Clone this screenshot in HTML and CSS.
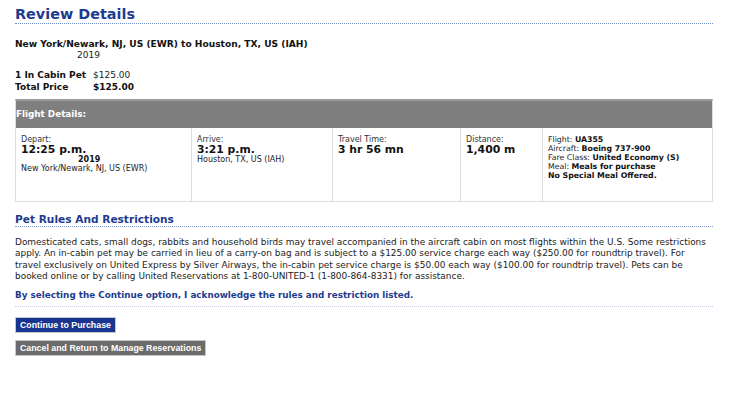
FILE: index.html
```html
<!DOCTYPE html>
<html lang="en">
<head>
    <meta charset="UTF-8">
    <title>Review Details</title>
    <link rel="stylesheet" href="styles.css">
</head>
<body>
    <div class="page">
        <h1 class="title">Review Details</h1>

        <div class="route">
            <p class="route-name">New York/Newark, NJ, US (EWR) to Houston, TX, US (IAH)</p>
            <p class="route-date">2019</p>
        </div>

        <div class="price">
            <div class="price-row"><span class="price-label">1 In Cabin Pet</span><span>$125.00</span></div>
            <div class="price-row total"><span class="price-label">Total Price</span><span>$125.00</span></div>
        </div>

        <div class="flight">
            <div class="flight-head">Flight Details:</div>
            <div class="flight-body">
                <div class="cell">
                    <div class="lbl">Depart:</div>
                    <div class="big">12:25 p.m.</div>
                    <div class="date">2019</div>
                    <div>New York/Newark, NJ, US (EWR)</div>
                </div>
                <div class="cell">
                    <div class="lbl">Arrive:</div>
                    <div class="big">3:21 p.m.</div>
                    <div>Houston, TX, US (IAH)</div>
                </div>
                <div class="cell">
                    <div class="lbl">Travel Time:</div>
                    <div class="big">3 hr 56 mn</div>
                </div>
                <div class="cell">
                    <div class="lbl">Distance:</div>
                    <div class="big">1,400 m</div>
                </div>
                <div class="cell info">
                    <div>Flight: <b>UA355</b></div>
                    <div>Aircraft: <b>Boeing 737-900</b></div>
                    <div>Fare Class: <b>United Economy (S)</b></div>
                    <div>Meal: <b>Meals for purchase</b></div>
                    <div><b>No Special Meal Offered.</b></div>
                </div>
            </div>
        </div>

        <h2 class="section">Pet Rules And Restrictions</h2>
        <p class="rules">Domesticated cats, small dogs, rabbits and household birds may travel accompanied in the aircraft cabin on most flights within the U.S. Some restrictions apply. An in-cabin pet may be carried in lieu of a carry-on bag and is subject to a $125.00 service charge each way ($250.00 for roundtrip travel). For travel exclusively on United Express by Silver Airways, the in-cabin pet service charge is $50.00 each way ($100.00 for roundtrip travel). Pets can be booked online or by calling United Reservations at 1-800-UNITED-1 (1-800-864-8331) for assistance.</p>

        <p class="agree">By selecting the Continue option, I acknowledge the rules and restriction listed.</p>

        <div class="actions">
            <button class="btn btn-primary">Continue to Purchase</button>
            <button class="btn btn-gray">Cancel and Return to Manage Reservations</button>
        </div>
    </div>
</body>
</html>
```

FILE: styles.css
```css
body {
    margin: 0;
    font-family: Verdana, "DejaVu Sans", sans-serif;
    font-size: 9px;
    color: #222;
    background: #fff;
}
p {
    margin: 0;
}
.page {
    width: 698px;
    padding: 6px 0 0 15px;
}
.title {
    margin: 0;
    font-size: 14.4px;
    line-height: 17px;
    color: #1d3b8f;
    padding-bottom: 0;
    border-bottom: 1px dotted #6f8ccc;
}
.route {
    margin-top: 15px;
}
.route-name {
    font-size: 9.1px;
    font-weight: bold;
    color: #111;
    line-height: 11px;
}
.route-date {
    padding-left: 62px;
    line-height: 11px;
}
.price {
    margin-top: 8px;
    line-height: 12px;
    padding-bottom: 6px;
    white-space: nowrap;
}
.price-row {
    display: flex;
}
.price-label {
    width: 78px;
    font-weight: bold;
    color: #111;
}
.total span {
    font-weight: bold;
    color: #111;
}
.flight {
    border: 1px solid #ddd;
    border-top: 2px solid #999;
}
.flight-head {
    background: #7f7f7f;
    color: #fff;
    font-size: 8.8px;
    font-weight: bold;
    line-height: 27px;
}
.flight-body {
    display: grid;
    grid-template-columns: 176px 141px 128px 82px 1fr;
    height: 73px;
}
.cell {
    padding: 7px 4px 0 5px;
    border-right: 1px solid #ddd;
    font-size: 8px;
    line-height: 9px;
    white-space: nowrap;
}
.cell:last-child {
    border-right: 0;
}
.lbl {
    color: #333;
}
.big {
    font-size: 10.8px;
    line-height: 11px;
    font-weight: bold;
    color: #111;
}
.date {
    font-weight: bold;
    padding-left: 57px;
    color: #111;
}
.info {
    font-size: 7.8px;
}
.info b {
    color: #111;
}
.section {
    margin: 10px 0 0;
    font-size: 10.6px;
    line-height: 14px;
    color: #1d3b8f;
    border-bottom: 1px dotted #8aa0d4;
}
.rules {
    margin-top: 10px;
    font-size: 8.95px;
    line-height: 11.4px;
}
.agree {
    margin-top: 6px;
    font-size: 8.8px;
    font-weight: bold;
    color: #1d3b8f;
    line-height: 12px;
    padding-bottom: 5px;
    border-bottom: 1px dotted #c5cee6;
}
.actions {
    display: flex;
    flex-direction: column;
    align-items: flex-start;
    gap: 7px;
    margin-top: 10px;
}
.btn {
    font-family: "Liberation Sans", Arial, sans-serif;
    font-size: 8.8px;
    font-weight: bold;
    color: #fff;
    border: 1px solid #c8c8c8;
    padding: 1px 4px;
    line-height: 12px;
}
.btn-primary {
    background: #1a3591;
}
.btn-gray {
    background: #6b6b6b;
}
```
